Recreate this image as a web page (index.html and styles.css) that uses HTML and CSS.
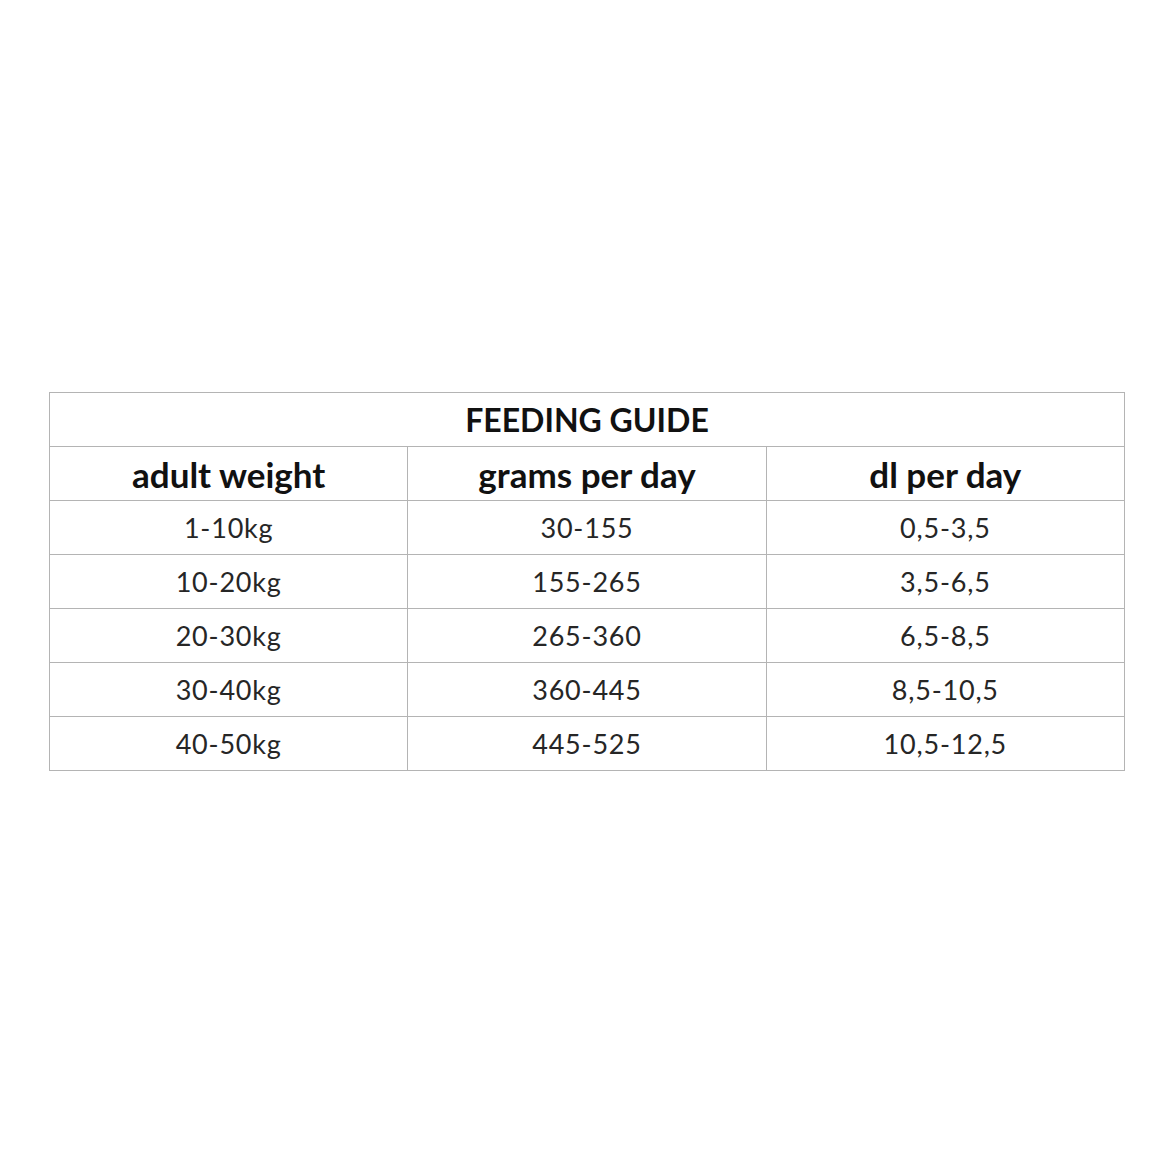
FILE: index.html
```html
<!DOCTYPE html>
<html>
<head>
<meta charset="utf-8">
<link rel="stylesheet" href="styles.css">
</head>
<body>
<div class="page">
  <table class="guide">
    <colgroup><col><col><col></colgroup>
    <thead>
      <tr><th class="title" colspan="3">FEEDING GUIDE</th></tr>
      <tr class="head"><th>adult weight</th><th>grams per day</th><th>dl per day</th></tr>
    </thead>
    <tbody>
      <tr><td>1-10kg</td><td>30-155</td><td>0,5-3,5</td></tr>
      <tr><td>10-20kg</td><td>155-265</td><td>3,5-6,5</td></tr>
      <tr><td>20-30kg</td><td>265-360</td><td>6,5-8,5</td></tr>
      <tr><td>30-40kg</td><td>360-445</td><td>8,5-10,5</td></tr>
      <tr><td>40-50kg</td><td>445-525</td><td>10,5-12,5</td></tr>
    </tbody>
  </table>
</div>
</body>
</html>
```
FILE: styles.css
```css
html, body {
  margin: 0;
  background: #ffffff;
}
.page {
  padding: 392px 0 0 49px;
}
.guide {
  width: 1076px;
  table-layout: fixed;
  border-collapse: collapse;
  font-family: Lato, "Open Sans", sans-serif;
  color: #222;
}
.guide th, .guide td {
  border: 1px solid #b4b4b4;
  height: 54px;
  padding: 0;
  text-align: center;
  vertical-align: middle;
  box-sizing: border-box;
}
.guide td {
  font-size: 27px;
  font-weight: 400;
  letter-spacing: 0.8px;
  color: #262626;
}
.guide th {
  font-size: 35px;
  font-weight: 700;
  color: #111;
}
.guide .title {
  font-size: 32px;
}
```
